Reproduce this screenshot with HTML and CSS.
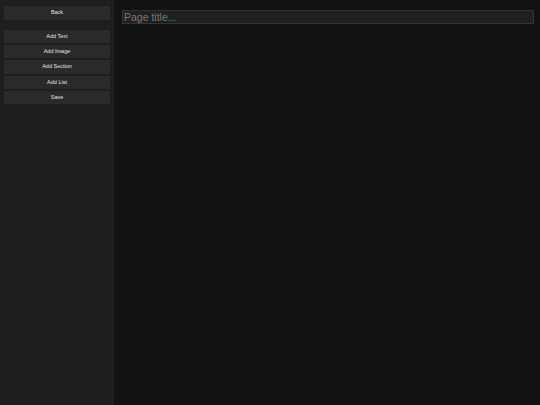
FILE: index.html
```html
<!DOCTYPE html>
<html>
<head>
<meta charset="utf-8">
<link rel="stylesheet" href="styles.css">
</head>
<body>
<div class="app">
  <aside class="sidebar">
    <button class="btn btn-back">Back</button>
    <div class="tools">
      <button class="btn">Add Text</button>
      <button class="btn">Add Image</button>
      <button class="btn">Add Section</button>
      <button class="btn">Add List</button>
      <button class="btn">Save</button>
    </div>
  </aside>
  <main class="main">
    <input class="title-input" type="text" placeholder="Page title...">
  </main>
</div>
</body>
</html>
```

FILE: styles.css
```css
html, body {
  margin: 0;
  padding: 0;
  height: 100%;
  background: #121212;
  font-family: "Liberation Sans", Arial, sans-serif;
}
.app {
  display: flex;
  height: 100%;
}
.sidebar {
  width: 114px;
  box-sizing: border-box;
  background: #1e1e1e;
  padding: 6.4px 4px;
  display: flex;
  flex-direction: column;
}
.tools {
  display: flex;
  flex-direction: column;
  gap: 2px;
  margin-top: 10px;
}
.btn {
  display: block;
  width: 100%;
  height: 13.3px;
  margin: 0;
  padding: 0;
  border: none;
  background: #2a2a2a;
  color: #e6e6e6;
  font-family: "Liberation Sans", Arial, sans-serif;
  font-size: 5.5px;
  line-height: 13.3px;
  text-align: center;
}
.main {
  flex: 1;
  padding: 10px 6px 0 8px;
}
.title-input {
  display: block;
  width: 100%;
  box-sizing: border-box;
  height: 14px;
  margin: 0;
  padding: 0 1px;
  background: #202020;
  border: 1px solid #333333;
  color: #dddddd;
  font-family: "Liberation Sans", Arial, sans-serif;
  font-size: 10.5px;
  outline: none;
}
.title-input::placeholder {
  color: #777777;
}
```
